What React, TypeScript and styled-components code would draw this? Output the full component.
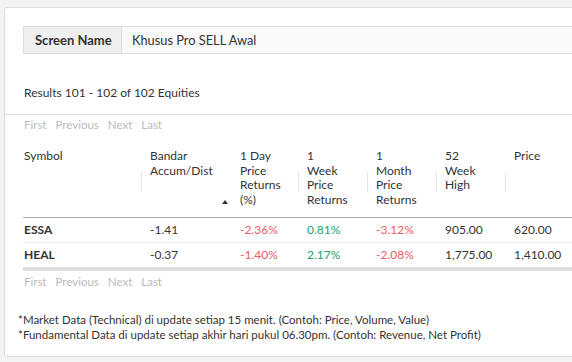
import styled, { createGlobalStyle } from "styled-components";

const GlobalStyle = createGlobalStyle`
  html, body {
    margin: 0;
    padding: 0;
    background: #f3f3f3;
    overflow: hidden;
  }
  body {
    font-family: Lato, "Open Sans", sans-serif;
    color: #333;
  }
`;

const Page = styled.div`
  padding: 7px 0 0 4px;
  height: 362px;
  box-sizing: border-box;
`;

const Card = styled.div`
  width: 600px;
  height: 350px;
  box-sizing: border-box;
  background: #fff;
  border: 1px solid #dcdcdc;
  border-radius: 3px;
`;

const TopSection = styled.div`
  padding: 18px 0 12px 18px;
  border-bottom: 1px solid #ddd;
`;

const NameBox = styled.div`
  display: flex;
  height: 28px;
  box-sizing: border-box;
  border: 1px solid #ddd;
  font-size: 13px;
`;

const NameLabel = styled.div`
  width: 98px;
  box-sizing: border-box;
  display: flex;
  align-items: center;
  padding-left: 11px;
  background: #efefef;
  border-right: 1px solid #ddd;
  font-weight: 700;
`;

const NameValue = styled.div`
  flex: 1;
  display: flex;
  align-items: center;
  padding-left: 10px;
  background: #f9f9f9;
  font-size: 12.8px;
`;

const Results = styled.div`
  margin-top: 30px;
  font-size: 12px;
  line-height: 18px;
  padding-left: 1px;
`;

const BottomSection = styled.div`
  padding: 2px 0 0 18px;
`;

const Pager = styled.div<{ $top?: number }>`
  display: flex;
  gap: 9px;
  font-size: 11.5px;
  line-height: 16px;
  color: #bbb;
  padding-left: 1px;
  margin-top: ${(p) => p.$top ?? 0}px;
`;

const Table = styled.table`
  margin-top: 16px;
  border-collapse: collapse;
  table-layout: fixed;
  width: 552px;
  font-size: 12px;
`;

const Th = styled.th<{ $sep?: boolean }>`
  position: relative;
  text-align: left;
  vertical-align: top;
  font-weight: 400;
  line-height: 14.7px;
  padding: 0 0 9px 9px;
  border-bottom: 1px solid #aaa;

  &:first-child {
    padding-left: 1px;
  }

  &::before {
    content: "";
    display: ${(p) => (p.$sep ? "block" : "none")};
    position: absolute;
    left: 0;
    top: 23px;
    height: 20px;
    border-left: 1px solid #e6e6e6;
  }
`;

const SortArrow = styled.span`
  position: absolute;
  right: 3px;
  bottom: 13px;
  width: 0;
  height: 0;
  border-left: 3.5px solid transparent;
  border-right: 3.5px solid transparent;
  border-bottom: 4px solid #333;
`;

const Td = styled.td<{ $tone?: "up" | "down" }>`
  height: 24px;
  padding: 0 0 0 9px;
  line-height: 24px;
  white-space: nowrap;
  color: ${(p) => (p.$tone === "up" ? "#1da36a" : p.$tone === "down" ? "#ee5a62" : "#333")};
  border-bottom: 1px solid #eee;

  &:first-child {
    padding-left: 1px;
    font-weight: 700;
  }
`;

const LastRow = styled.tr`
  td {
    border-bottom: 4px solid #ddd;
  }
`;

const Notes = styled.div`
  margin-top: 22px;
  margin-left: -5px;
  font-size: 11.5px;
  line-height: 15.5px;
`;

type Tone = "up" | "down" | undefined;

interface Row {
  symbol: string;
  bandar: string;
  day: [string, Tone];
  week: [string, Tone];
  month: [string, Tone];
  high: string;
  price: string;
}

const rows: Row[] = [
  { symbol: "ESSA", bandar: "-1.41", day: ["-2.36%", "down"], week: ["0.81%", "up"], month: ["-3.12%", "down"], high: "905.00", price: "620.00" },
  { symbol: "HEAL", bandar: "-0.37", day: ["-1.40%", "down"], week: ["2.17%", "up"], month: ["-2.08%", "down"], high: "1,775.00", price: "1,410.00" },
];

const widths = [118, 90, 67, 69, 69, 69, 70];

function Cells({ r }: { r: Row }) {
  return (
    <>
      <Td>{r.symbol}</Td>
      <Td>{r.bandar}</Td>
      <Td $tone={r.day[1]}>{r.day[0]}</Td>
      <Td $tone={r.week[1]}>{r.week[0]}</Td>
      <Td $tone={r.month[1]}>{r.month[0]}</Td>
      <Td>{r.high}</Td>
      <Td>{r.price}</Td>
    </>
  );
}

function Pagination({ top }: { top?: number }) {
  return (
    <Pager $top={top}>
      <span>First</span>
      <span>Previous</span>
      <span>Next</span>
      <span>Last</span>
    </Pager>
  );
}

export default function App() {
  return (
    <Page>
      <GlobalStyle />
      <Card>
        <TopSection>
          <NameBox>
            <NameLabel>Screen Name</NameLabel>
            <NameValue>Khusus Pro SELL Awal</NameValue>
          </NameBox>
          <Results>Results 101 - 102 of 102 Equities</Results>
        </TopSection>
        <BottomSection>
          <Pagination />
          <Table>
            <colgroup>
              {widths.map((w, i) => (
                <col key={i} style={{ width: w }} />
              ))}
            </colgroup>
            <thead>
              <tr>
                <Th>Symbol</Th>
                <Th $sep>
                  Bandar
                  <br />
                  Accum/Dist
                  <SortArrow />
                </Th>
                <Th>
                  1 Day
                  <br />
                  Price
                  <br />
                  Returns
                  <br />
                  (%)
                </Th>
                <Th $sep>
                  1<br />
                  Week
                  <br />
                  Price
                  <br />
                  Returns
                </Th>
                <Th $sep>
                  1<br />
                  Month
                  <br />
                  Price
                  <br />
                  Returns
                </Th>
                <Th $sep>
                  52
                  <br />
                  Week
                  <br />
                  High
                </Th>
                <Th $sep>Price</Th>
              </tr>
            </thead>
            <tbody>
              <tr>
                <Cells r={rows[0]} />
              </tr>
              <LastRow>
                <Cells r={rows[1]} />
              </LastRow>
            </tbody>
          </Table>
          <Pagination top={3} />
          <Notes>
            *Market Data (Technical) di update setiap 15 menit. (Contoh: Price, Volume, Value)
            <br />
            *Fundamental Data di update setiap akhir hari pukul 06.30pm. (Contoh: Revenue, Net Profit)
          </Notes>
        </BottomSection>
      </Card>
    </Page>
  );
}
